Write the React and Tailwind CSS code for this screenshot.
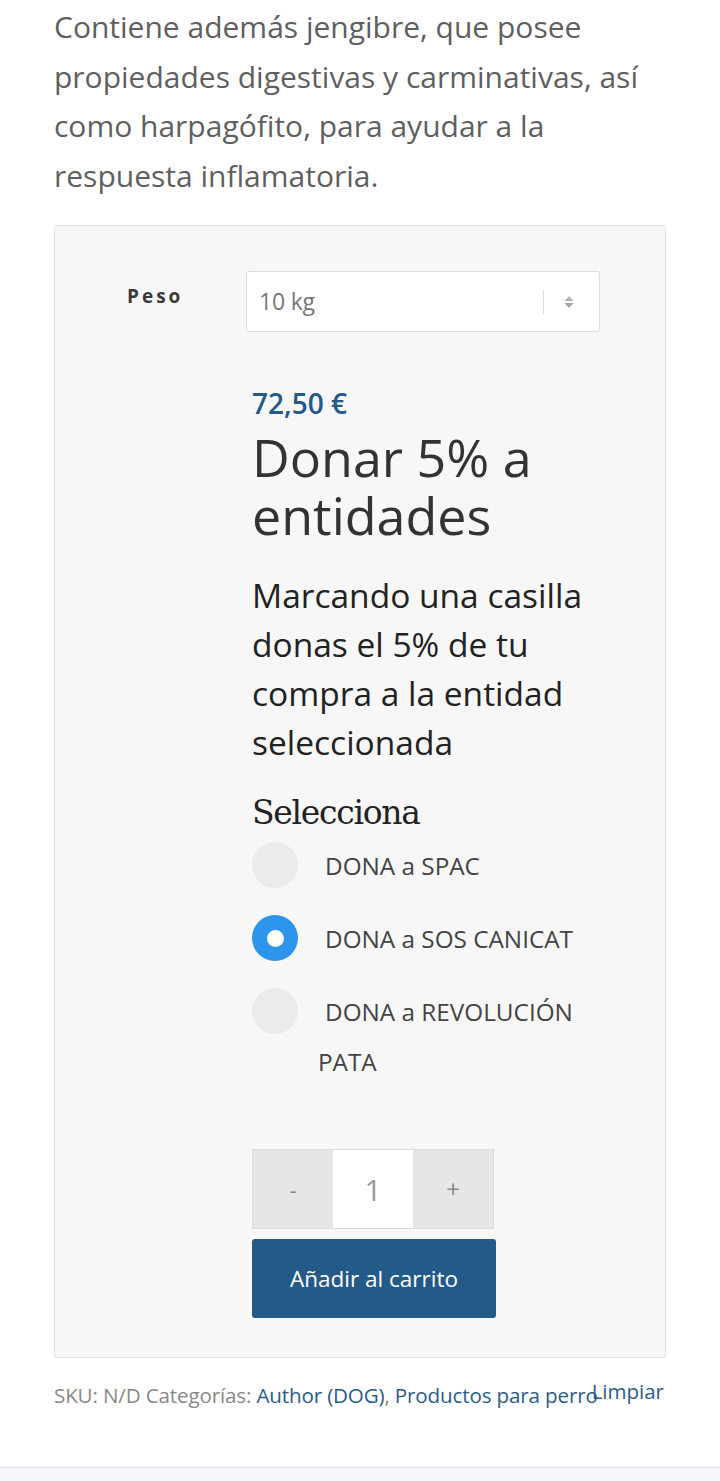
export default function App() {
  const font = { fontFamily: '"Open Sans", "Noto Sans", sans-serif' };
  const radios = [
    { label: "DONA a SPAC", checked: false },
    { label: "DONA a SOS CANICAT", checked: true },
    { label: "DONA a REVOLUCIÓN PATA", checked: false },
  ];
  return (
    <div className="w-[720px] min-h-[1481px] bg-white flex flex-col" style={font}>
      <div className="px-[54px] pt-[2px]">
        <p className="text-[30px] leading-[49.5px] text-[#5f5f5f]">
          Contiene además jengibre, que posee propiedades digestivas y carminativas, así como harpagófito, para ayudar a la respuesta inflamatoria.
        </p>
        <div className="mt-[25px] border border-[#e4e4e4] rounded-[2px] bg-[#f7f7f7] pt-[45px] pb-[39px]">
          <div className="flex items-center">
            <div className="w-[191px] pl-[72px] mb-[10px] text-[19px] font-bold tracking-[3px] text-[#3a3a3a]">Peso</div>
            <div className="w-[354px] h-[61px] bg-white border border-[#dedede] rounded-[3px] flex items-center pl-[12px] pr-[24px]">
              <span className="flex-1 text-[23px] tracking-[-0.2px] text-[#777]">10 kg</span>
              <span className="w-px h-[24px] bg-[#dcdcdc] mr-[19px]"></span>
              <svg width="12" height="18" viewBox="0 0 12 18">
                <path d="M6 3 L10.5 8 L1.5 8 Z" fill="#b4b4b4" />
                <path d="M6 15 L10.5 10 L1.5 10 Z" fill="#a4a4a4" />
              </svg>
            </div>
          </div>
          <div className="ml-[197px] mr-[30px]">
            <div className="mt-[54px] text-[28px] leading-[34px] font-semibold text-[#24598a]">72,50 €</div>
            <h2 className="mt-[8px] text-[52px] leading-[58px] text-[#333]">Donar 5% a entidades</h2>
            <p className="mt-[27px] text-[33.5px] leading-[49px] text-[#222]">
              Marcando una casilla donas el 5% de tu compra a la entidad seleccionada
            </p>
            <div className="mt-[24px] text-[33px] leading-[44px] text-[#222] tracking-[-1.3px]" style={{ fontFamily: '"DejaVu Serif", "Liberation Serif", serif' }}>
              Selecciona
            </div>
            <div className="mt-[6px] flex flex-col gap-[23px]">
              {radios.map((r) => (
                <div key={r.label} className="flex items-start">
                  <div
                    className={
                      r.checked
                        ? "mt-[1px] w-[46px] h-[46px] shrink-0 rounded-full bg-[#2c94ea] flex items-center justify-center"
                        : "mt-[1px] w-[46px] h-[46px] shrink-0 rounded-full bg-[#ebebeb]"
                    }
                  >
                    {r.checked && <div className="w-[17px] h-[17px] rounded-full bg-white"></div>}
                  </div>
                  <div className="ml-[20px] w-[282px] text-[24.3px] leading-[50px] text-[#444] indent-[7px]">{r.label}</div>
                </div>
              ))}
            </div>
            <div className="mt-[62px] flex w-[242px] h-[80px] border border-[#dcdcdc]">
              <div className="w-[80px] bg-[#e6e6e6] flex items-center justify-center text-[22px] text-[#888]">-</div>
              <div className="w-[80px] bg-white flex items-center justify-center text-[30px] text-[#999]">1</div>
              <div className="flex-1 bg-[#e6e6e6] flex items-center justify-center text-[24px] text-[#888]">+</div>
            </div>
            <button className="mt-[10px] w-[244px] h-[79px] bg-[#245a88] rounded-[3px] text-white text-[22.5px]">
              Añadir al carrito
            </button>
          </div>
        </div>
        <div className="relative mt-[22px] text-[20.6px] leading-[30px] text-[#888] tracking-[-0.15px]">
          SKU: N/D Categorías: <span className="text-[#2c5b88]">Author (DOG)</span>,{" "}
          <span className="text-[#2c5b88]">Productos para perro</span>
          <span className="absolute right-[2px] top-[-4px] text-[20.5px] tracking-normal text-[#2c5b88]">Limpiar</span>
        </div>
      </div>
      <div className="mt-[57px] border-t border-[#e2e2e6] bg-[#f8f8fc] flex-1"></div>
    </div>
  );
}
